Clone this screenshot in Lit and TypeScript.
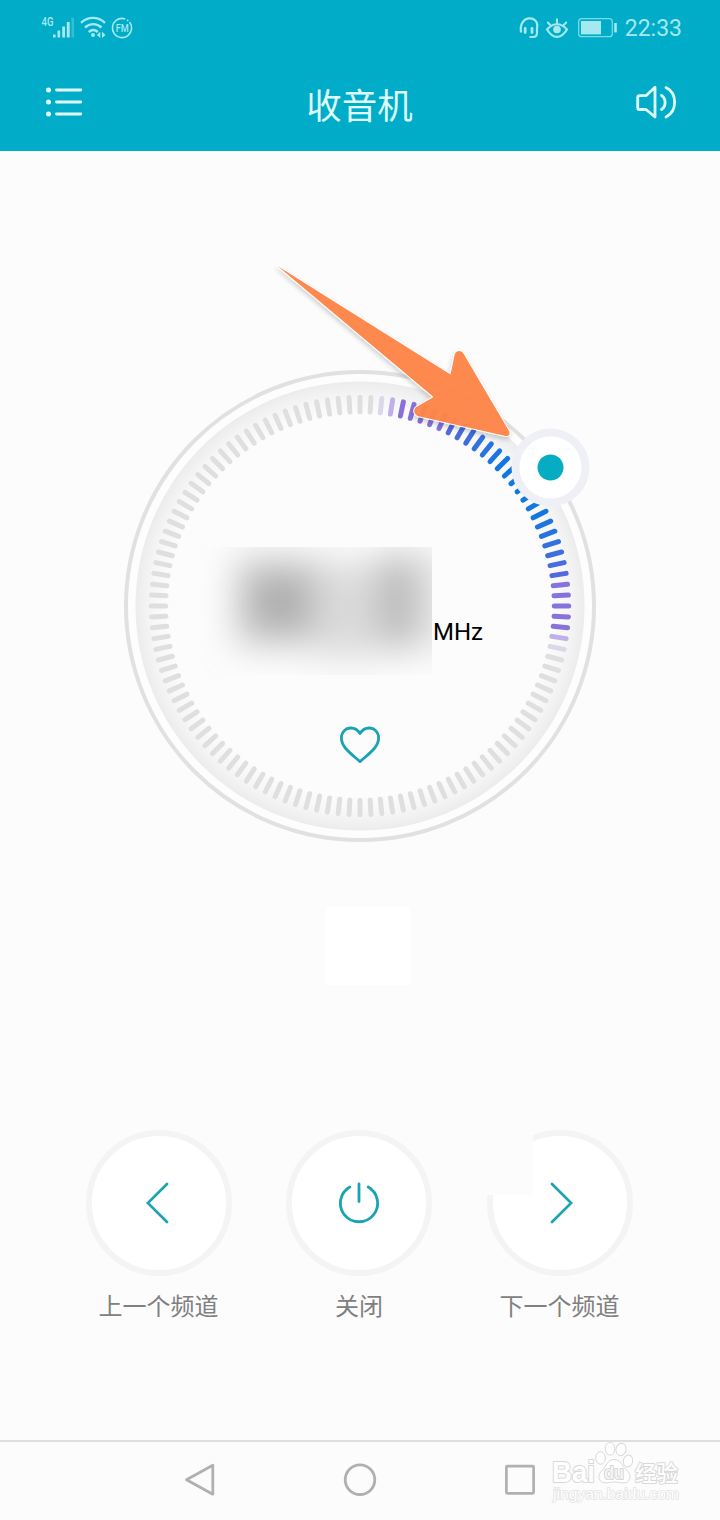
import { LitElement, html, svg, css } from "lit";
import { customElement } from "lit/decorators.js";

const CX = 240;
const CY = 240;
const KNOB_ANGLE = 54;

const mix = (a: number[], b: number[], t: number) =>
  `rgb(${a.map((v, i) => Math.round(v + (b[i] - v) * t)).join(",")})`;

/** Tick colour by angular distance from the knob. */
function tickColor(angle: number): string {
  const d = Math.abs(angle - KNOB_ANGLE);
  const blue = [18, 119, 224];
  const indigo = [84, 106, 220];
  const violet = [132, 115, 224];
  const purple = [138, 113, 217];
  if (d <= 9) return mix(blue, blue, 0);
  if (d <= 27) return mix(blue, indigo, (d - 9) / 18);
  if (d <= 42) return mix(violet, purple, (d - 30) / 12);
  if (d === 45) return "#bfb0ea";
  if (d === 48) return "#dcd8ea";
  return "#dfdfdf";
}

@customElement("radio-dial")
export class RadioDial extends LitElement {
  static styles = css`
    :host {
      display: grid;
      width: 480px;
      height: 480px;
    }
    .face,
    .readout {
      grid-area: 1 / 1;
    }
    .face {
      display: block;
      overflow: visible;
    }
    .readout {
      display: flex;
      flex-direction: column;
      align-items: center;
      padding-top: 181px;
    }
    .freq {
      display: flex;
      align-items: flex-end;
      align-self: flex-start;
      padding-left: 82px;
      height: 128px;
    }
    .blurred {
      display: block;
    }
    .unit {
      font: 24px/28px Roboto, sans-serif;
      color: #000;
      padding: 0 0 29px 1px;
    }
    .heart {
      display: block;
      margin-top: 50px;
    }
  `;

  render() {
    const ticks = Array.from({ length: 120 }, (_, i) => i * 3);
    return html`
      <svg class="face" width="480" height="480" viewBox="0 0 480 480">
        <defs>
          <radialGradient id="shade" gradientUnits="userSpaceOnUse" cx="240" cy="240" r="224.500">
            <stop offset="0.85" stop-color="#fcfcfc" />
            <stop offset="0.93" stop-color="#f6f6f6" />
            <stop offset="1" stop-color="#ececec" />
          </radialGradient>
        </defs>
        <circle cx="240" cy="240" r="234" fill="#fdfdfd" stroke="#e1e1e1" stroke-width="4" />
        <circle cx="240" cy="240" r="224.500" fill="url(#shade)" />
        ${ticks.map(
          (a) => svg`<line x1=${CX} y1=${CY - 208.7} x2=${CX} y2=${CY - 194.3}
            stroke=${tickColor(a)} stroke-width="5" stroke-linecap="round"
            transform="rotate(${a} ${CX} ${CY})"></line>`
        )}
        <circle cx="430.500" cy="101.500" r="39" fill="#eef0f6" />
        <circle cx="430.500" cy="101.500" r="31" fill="#fff" />
        <circle cx="430.500" cy="101.500" r="13" fill="#06adc2" />
      </svg>
      <div class="readout">
        <div class="freq">
          <svg class="blurred" width="230" height="128" viewBox="0 0 230 128">
            <defs>
              <filter id="soft" x="-60%" y="-60%" width="220%" height="220%">
                <feGaussianBlur stdDeviation="18" />
              </filter>
            </defs>
            <rect width="230" height="128" fill="#fcfcfc" />
            <g filter="url(#soft)">
              <rect x="36" y="14" width="86" height="82" fill="#bebebe" />
              <rect x="56" y="34" width="50" height="44" fill="#acacac" />
              <rect x="112" y="16" width="62" height="94" fill="#dadada" />
              <rect x="176" y="10" width="42" height="90" fill="#b8b8b8" />
              <rect x="216" y="6" width="30" height="96" fill="#e4e4e4" />
            </g>
          </svg>
          <span class="unit">MHz</span>
        </div>
        <svg class="heart" width="42" height="40" viewBox="0 0 42 40" fill="none"
          stroke="#1aa3b3" stroke-width="2.800" stroke-linejoin="round">
          <path d="M21 8.600C18.600 4.600 15.500 3 11.900 3C6.400 3 2.400 7.400 2.400 13C2.400 22.400 12.500 29 21 36.600C29.500 29 39.600 22.400 39.600 13C39.600 7.400 35.600 3 30.100 3C26.500 3 23.400 4.600 21 8.600Z" />
        </svg>
      </div>
    `;
  }
}

@customElement("app-root")
export class AppRoot extends LitElement {
  static styles = css`
    :host {
      display: flex;
      flex-direction: column;
      position: relative;
      width: 720px;
      height: 1520px;
      overflow: hidden;
      background: #fcfcfc;
      font-family: "Noto Sans CJK SC", sans-serif;
    }
    svg {
      display: block;
    }
    header {
      height: 151px;
      background: #00acc7;
    }
    .status {
      display: flex;
      justify-content: space-between;
      height: 56px;
      padding: 0 38px 0 40px;
      color: #a5e9f0;
    }
    .clock-side {
      display: flex;
      align-items: center;
    }
    .clock {
      font: 23px/28px Roboto, sans-serif;
      margin-left: 7px;
      padding-top: 2px;
    }
    .bar {
      display: grid;
      grid-template-columns: 42px 1fr 42px;
      align-items: center;
      height: 92px;
      padding: 0 43px 0 44px;
      color: #dffcff;
    }
    .bar h1 {
      margin: 0;
      padding: 3px 2px 0 0;
      font-size: 35.500px;
      line-height: 52px;
      font-weight: 400;
      text-align: center;
    }
    main {
      display: flex;
      flex-direction: column;
      align-items: center;
      height: 1289px;
      box-sizing: border-box;
      padding-top: 215px;
    }
    .blank {
      width: 84px;
      height: 79px;
      margin: 60px 0 0 16px;
      background: #fff;
    }
    .controls {
      display: grid;
      grid-template-columns: repeat(3, 146px);
      column-gap: 54.500px;
      margin: 145px 2px 0 0;
    }
    .control {
      position: relative;
      display: flex;
      flex-direction: column;
      align-items: center;
      color: #808080;
      font-size: 24px;
      line-height: 36px;
      font-weight: 400;
      white-space: nowrap;
    }
    .disc {
      display: grid;
      place-items: center;
      box-sizing: border-box;
      width: 146px;
      height: 146px;
      margin-bottom: 11px;
      border: 6px solid #f4f4f4;
      border-radius: 50%;
      background: #fff;
    }
    .cover {
      position: absolute;
      left: -2px;
      top: -2px;
      width: 48px;
      height: 67px;
      background: #fcfcfc;
    }
    .nav {
      display: flex;
      gap: 124px;
      height: 80px;
      box-sizing: border-box;
      border-top: 2px solid #dfdfdf;
      align-items: center;
      padding-left: 182px;
      padding-bottom: 2px;
    }
    .arrow {
      position: absolute;
      left: 260px;
      top: 250px;
    }
    .watermark {
      position: absolute;
      left: 540px;
      top: 1430px;
    }
  `;

  private statusLeft() {
    return html`<svg width="100" height="56" viewBox="40 0 100 56" fill="#a5e9f0" stroke="#a5e9f0">
      <text x="41.500" y="26" font-family="Roboto" font-size="13" font-weight="500" stroke="none" textLength="12" lengthAdjust="spacingAndGlyphs">4G</text>
      <g stroke="none">
        <rect x="53" y="34.500" width="2.600" height="3" />
        <rect x="57.500" y="30.500" width="2.600" height="7" />
        <rect x="62.200" y="26.500" width="2.800" height="11" />
        <rect x="66.800" y="22" width="2.900" height="15.500" />
        <rect x="71.500" y="17.500" width="2.600" height="20" opacity=".3" />
      </g>
      <g fill="none" stroke-width="2.400">
        <path d="M81 22.800C88 16.200 98 16.200 105 22.800" />
        <path d="M85 27.500C90 23 96.500 23 101.500 27.500" />
        <path d="M88.800 32C91.500 29.500 95 29.500 97.800 32" />
        <circle cx="122" cy="28" r="9.600" stroke-width="1.600" stroke-dasharray="54.500 2 1.600 2.220" transform="rotate(-38 122 28)" />
      </g>
      <circle cx="93" cy="35" r="2" stroke="none" />
      <path stroke="none" d="M100.300 31.800V38L96.800 34.900ZM102 31.800V38L105.500 34.900Z" />
      <text x="122.200" y="31.800" text-anchor="middle" font-family="Roboto" font-size="10" font-weight="500" stroke="none" textLength="13" lengthAdjust="spacingAndGlyphs">FM</text>
    </svg>`;
  }

  private statusRight() {
    return html`<svg width="102" height="56" viewBox="516 0 102 56" fill="none" stroke="#a5e9f0">
      <path stroke-width="2.200" d="M521.200 32.500C517.500 14.500 540 14.500 537 28V33C537 35.800 535.500 37 533 37H529.500" />
      <path stroke-width="2.800" stroke-linecap="round" d="M525.200 28.500V32.500M532 28.500V32.500" />
      <path stroke-width="2.200" d="M547 29.500C553 22.500 561 22.500 567 29.500C561 39.300 553 39.300 547 29.500Z" />
      <path stroke-width="2" stroke-linecap="round" d="M557 19.200V23.500M547.800 22.500L550.300 25M566.200 22.500L563.700 25" />
      <circle cx="557" cy="29.500" r="3.800" fill="#a5e9f0" stroke="none" />
      <rect x="578.700" y="18.700" width="33.600" height="18" rx="3" stroke-width="1.300" stroke="#78dbe6" />
      <rect x="581" y="21" width="20" height="13.400" fill="#a5e9f0" stroke="none" />
      <rect x="614.200" y="23" width="2.600" height="9.400" fill="#a5e9f0" stroke="none" />
    </svg>`;
  }

  render() {
    return html`
      <header>
        <div class="status">
          ${this.statusLeft()}
          <div class="clock-side">${this.statusRight()}<span class="clock">22:33</span></div>
        </div>
        <div class="bar">
          <svg width="40" height="32" viewBox="0 0 40 32" stroke="#dffcff" stroke-width="2.800" stroke-linecap="round">
            <path d="M12.500 4H36.800M12.500 16H36.800M12.500 28H36.800" />
            <path stroke-width="5" d="M4.500 4h.01M4.500 16h.01M4.500 28h.01" />
          </svg>
          <h1>收音机</h1>
          <svg width="42" height="36" viewBox="0 0 42 36" fill="none" stroke="#dffcff" stroke-width="2.800" stroke-linejoin="round" stroke-linecap="round">
            <path d="M20 3.300V33L11 25.500H4.400Q2.700 25.500 2.700 23.700V13.700Q2.700 11.700 4.400 11.700H11Z" />
            <path d="M26.500 11.500C31.300 14.500 31.300 22.500 26.500 25.500M31 3.600C42.500 9.300 42.500 27.300 31 33" />
          </svg>
        </div>
      </header>
      <main>
        <radio-dial></radio-dial>
        <div class="blank"></div>
        <div class="controls">
          <div class="control">
            <div class="disc">
              <svg width="26" height="42" viewBox="0 0 26 42" fill="none" stroke="#1aa3b3" stroke-width="2.700" stroke-linecap="round">
                <path d="M21 2L1.800 21L21 40" />
              </svg>
            </div>
            上一个频道
          </div>
          <div class="control">
            <div class="disc">
              <svg width="42" height="42" viewBox="0 0 42 42" fill="none" stroke="#1aa3b3" stroke-width="2.800" stroke-linecap="round">
                <path d="M11.800 5A18.600 18.600 0 1 0 30.200 5M21 2V19.500" />
              </svg>
            </div>
            关闭
          </div>
          <div class="control">
            <div class="disc">
              <svg width="26" height="42" viewBox="0 0 26 42" fill="none" stroke="#1aa3b3" stroke-width="2.700" stroke-linecap="round">
                <path d="M5 2L24.200 21L5 40" />
              </svg>
            </div>
            <div class="cover"></div>
            下一个频道
          </div>
        </div>
      </main>
      <div class="nav">
        <svg width="36" height="36" viewBox="0 0 36 36" fill="none" stroke="#b0b0b0" stroke-width="2.800" stroke-linejoin="round">
          <path d="M30.800 3.200V32.200L4.500 17.700Z" />
        </svg>
        <svg width="36" height="36" viewBox="0 0 36 36" fill="none" stroke="#b0b0b0" stroke-width="2.800">
          <circle cx="18" cy="17.700" r="14.800" />
        </svg>
        <svg width="36" height="36" viewBox="0 0 36 36" fill="none" stroke="#b0b0b0" stroke-width="2.700" stroke-linejoin="round">
          <rect x="4.400" y="4.100" width="27.200" height="27.200" rx="0.800" />
        </svg>
      </div>
      <svg class="arrow" width="270" height="210" viewBox="260 250 270 210">
        <defs>
          <filter id="drop" x="-10%" y="-10%" width="120%" height="125%">
            <feDropShadow dx="-0.500" dy="2.500" stdDeviation="2.500" flood-color="#000" flood-opacity=".2" />
          </filter>
        </defs>
        <g opacity=".96">
          <path filter="url(#drop)" fill="#ff8548" stroke="#fff" stroke-width="2" stroke-linejoin="round" paint-order="stroke"
            d="M277.500 266L450.500 374.500L454.700 354.500Q456.500 349.500 461.500 351.500Q463 352.500 464 354.500L509 431Q511 436.500 505.500 436L417.500 416Q412 412.500 415.500 407.500L433.500 397Z" />
        </g>
      </svg>
      <svg class="watermark" width="160" height="85" viewBox="540 1430 160 85" fill="#fff" stroke="#d8d8d8" stroke-width="1">
        <g paint-order="stroke" stroke-width="2" stroke-linejoin="round">
          <text x="552" y="1482" font-family="Liberation Sans" font-weight="700" font-size="29" textLength="43" lengthAdjust="spacingAndGlyphs">Bai</text>
          <text x="635" y="1480.500" font-family="Noto Sans CJK SC" font-weight="500" font-size="22" textLength="43" lengthAdjust="spacingAndGlyphs">经验</text>
          <text x="553" y="1499" font-family="Liberation Sans" font-size="15" stroke="#e2e2e2" stroke-width="1.500" textLength="126" lengthAdjust="spacingAndGlyphs">jingyan.baidu.com</text>
        </g>
        <ellipse cx="600.500" cy="1458" rx="4.800" ry="6.200" />
        <ellipse cx="610" cy="1448.800" rx="4.800" ry="6.300" />
        <ellipse cx="621" cy="1449.500" rx="5" ry="6.300" transform="rotate(12 621 1449.500)" />
        <ellipse cx="628" cy="1461" rx="4.600" ry="6" transform="rotate(10 628 1461)" />
        <path d="M614 1459.500C607 1459.500 607 1466 602.500 1470C598.500 1473.500 598 1478 600.500 1481C604 1484.500 609 1482 614.500 1482S625 1484.500 628.500 1481C631 1478 630.500 1473.500 626.500 1470C622 1466 621 1459.500 614 1459.500Z" />
        <text x="604" y="1479" font-family="Liberation Sans" font-weight="700" font-size="18" fill="#f4f4f4" stroke="#cfcfcf" paint-order="stroke" stroke-width="1.600" textLength="20" lengthAdjust="spacingAndGlyphs">du</text>
      </svg>
    `;
  }
}
